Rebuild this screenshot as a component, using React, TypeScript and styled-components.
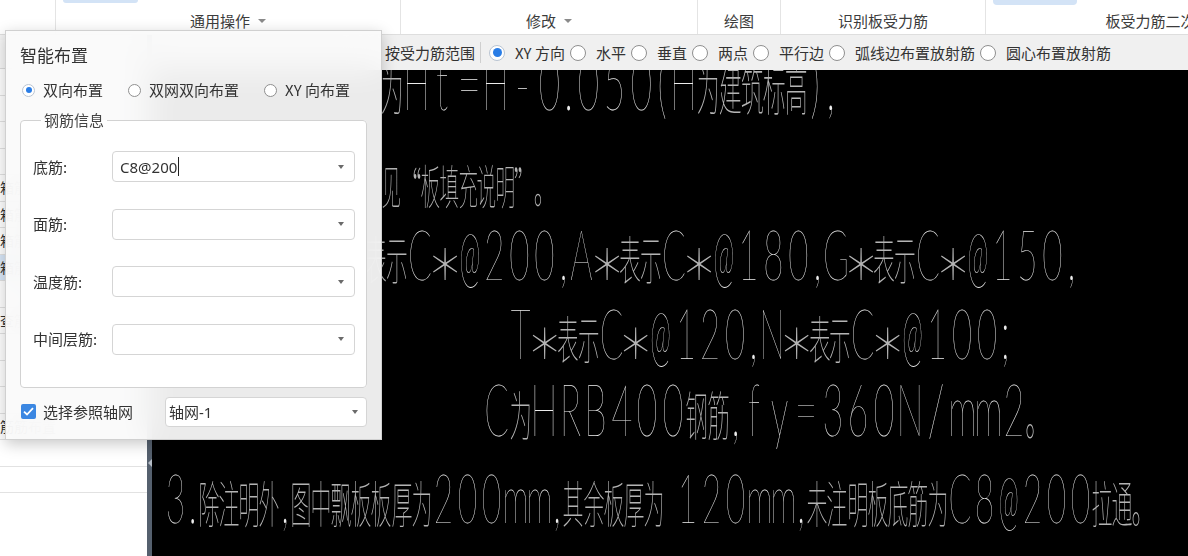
import React from "react";
import styled, { createGlobalStyle } from "styled-components";

const GlobalStyle = createGlobalStyle`
  html, body { margin: 0; padding: 0; }
  body {
    width: 1188px;
    height: 556px;
    overflow: hidden;
    background: #fff;
    font-family: "Noto Sans CJK SC", "Noto Sans", sans-serif;
  }
`;

const Page = styled.div`
  position: relative;
  width: 1188px;
  height: 556px;
  display: flex;
  flex-direction: column;
  overflow: hidden;
  color: #333;
  font-family: "Noto Sans CJK SC", "Noto Sans", sans-serif;
`;

/* ---------- ribbon ---------- */

const Ribbon = styled.div`
  height: 35px;
  flex: none;
  display: flex;
  background: #fff;
  border-bottom: 1px solid #dedede;
  box-sizing: border-box;
  overflow: hidden;
`;

const RibbonGroup = styled.div<{ $w: number; $first?: boolean }>`
  width: ${(p) => p.$w}px;
  flex: none;
  box-sizing: border-box;
  border-left: ${(p) => (p.$first ? "none" : "1px solid #e4e4e4")};
  display: flex;
  flex-direction: column;
  justify-content: space-between;
  align-items: center;
  padding-bottom: 3px;
`;

const ButtonStub = styled.div<{ $w: number; $h: number }>`
  align-self: flex-start;
  margin-left: 7px;
  width: ${(p) => p.$w}px;
  height: ${(p) => p.$h}px;
  background: #d3e3f6;
  border-radius: 0 0 4px 4px;
`;

const GroupLabel = styled.div`
  margin-top: auto;
  display: flex;
  align-items: center;
  font-size: 15px;
  line-height: 20px;
  color: #3c3c3c;
  white-space: nowrap;
`;

const Caret = styled.span`
  width: 0;
  height: 0;
  margin-left: 8px;
  border-left: 4px solid transparent;
  border-right: 4px solid transparent;
  border-top: 4px solid #8a8a8a;
`;

/* ---------- body ---------- */

const Body = styled.div`
  flex: 1;
  display: flex;
  min-height: 0;
`;

const LeftPanel = styled.div`
  width: 147px;
  flex: none;
  background: #fff;
  display: flex;
  flex-direction: column;
  overflow: hidden;
`;

const PanelHead = styled.div`
  height: 34px;
  flex: none;
  box-sizing: border-box;
  border-top: 5px solid #f3f3f3;
  border-bottom: 1px solid #dcdcdc;
  background: #f7f7f7;
`;

const PanelRow = styled.div<{ $active?: boolean }>`
  height: 26.5px;
  flex: none;
  box-sizing: border-box;
  border-bottom: 1px solid #e2e2e2;
  background: ${(p) => (p.$active ? "#d8e7f8" : "#fff")};
  font-size: 14px;
  line-height: 25px;
  white-space: nowrap;
  color: #333;
`;

const Splitter = styled.div`
  width: 5px;
  flex: none;
  background: #55606e;
  display: flex;
  flex-direction: column;
  align-items: center;
  padding-top: 424px;
  box-sizing: border-box;
`;

const SplitArrow = styled.span`
  width: 0;
  height: 0;
  border-top: 4px solid transparent;
  border-bottom: 4px solid transparent;
  border-right: 4px solid #b5bcc6;
`;

const Workspace = styled.div`
  flex: 1;
  display: flex;
  flex-direction: column;
  min-width: 0;
`;

const OptionsBar = styled.div`
  height: 35px;
  flex: none;
  display: flex;
  align-items: center;
  padding-left: 233px;
  background: #f0f0f0;
  font-size: 15px;
  color: #333;
  white-space: nowrap;
`;

const BarSep = styled.span`
  width: 1px;
  height: 21px;
  margin: 0 8px 0 5px;
  background: #cfcfcf;
`;

const BarOption = styled.label`
  display: flex;
  align-items: center;
  gap: 10px;
  margin-right: 5px;
`;

const Radio = styled.span<{ $on?: boolean; $size: number }>`
  width: ${(p) => p.$size}px;
  height: ${(p) => p.$size}px;
  flex: none;
  box-sizing: border-box;
  border-radius: 50%;
  border: 1px solid ${(p) => (p.$on ? "#b9c4d2" : "#8f8f8f")};
  background: #fff;
  display: inline-flex;
  align-items: center;
  justify-content: center;

  &::after {
    content: "";
    display: ${(p) => (p.$on ? "block" : "none")};
    width: ${(p) => p.$size - 7}px;
    height: ${(p) => p.$size - 7}px;
    border-radius: 50%;
    background: #2a7de6;
  }
`;

const Canvas = styled.div`
  flex: 1;
  position: relative;
  background: #000;
  overflow: hidden;
`;

/* ---------- CAD text on the canvas ---------- */

type Kind = "cjk" | "ast" | "full" | "punct" | "space" | "paren" | "at" | "sym" | "latin";

const kindOf = (ch: string): Kind => {
  if (ch === "＊") return "ast";
  if ("。“”".includes(ch)) return "full";
  if (/[\u4e00-\u9fff]/.test(ch)) return "cjk";
  if (",.;".includes(ch)) return "punct";
  if (ch === " ") return "space";
  if ("()".includes(ch)) return "paren";
  if (ch === "@") return "at";
  if ("=-/".includes(ch)) return "sym";
  return "latin";
};

// cell width, glyph size and horizontal squeeze per kind of character
const CELL: Record<Kind, { w: number; size: number; sx: number; cjk: boolean }> = {
  cjk: { w: 21, size: 52, sx: 0.42, cjk: true },
  ast: { w: 25, size: 42, sx: 0.85, cjk: true },
  full: { w: 22, size: 48, sx: 0.5, cjk: true },
  punct: { w: 12, size: 70, sx: 0.6, cjk: false },
  space: { w: 12, size: 70, sx: 1, cjk: false },
  paren: { w: 16, size: 70, sx: 0.5, cjk: false },
  at: { w: 25, size: 70, sx: 0.36, cjk: false },
  sym: { w: 26, size: 70, sx: 0.55, cjk: false },
  latin: { w: 25, size: 70, sx: 0.5, cjk: false },
};

const CadLine = styled.div<{ $s: number }>`
  position: absolute;
  white-space: nowrap;
  font-family: Lato, "DejaVu Sans", sans-serif;
  font-weight: 100;
  font-size: ${(p) => 70 * p.$s}px;
  line-height: 1;
  color: #ececec;
  filter: grayscale(1);
`;

const Cell = styled.span<{ $w: number }>`
  display: inline-flex;
  justify-content: center;
  width: ${(p) => p.$w}px;
  vertical-align: baseline;
`;

const Glyph = styled.span<{ $size: number; $sx: number; $cjk: boolean }>`
  display: inline-block;
  font-family: ${(p) =>
    p.$cjk
      ? '"Noto Sans CJK SC Thin", "Noto Sans CJK SC Light", "Noto Sans CJK SC", sans-serif'
      : 'Lato, "DejaVu Sans", sans-serif'};
  font-weight: 100;
  color: ${(p) => (p.$cjk ? "#b4b4b4" : "#ececec")};
  font-size: ${(p) => p.$size}px;
  line-height: 1;
  transform: scaleX(${(p) => p.$sx});
  transform-origin: center;
`;

const CAD_LINES = [
  { text: "为Ht=H-0.050(H为建筑标高),", x: 229, y: -25, s: 1.05 },
  { text: "见“板填充说明”。", x: 230, y: 78, s: 0.9 },
  { text: "表示C＊@200,A＊表示C＊@180,G＊表示C＊@150,", x: 213, y: 148, s: 1 },
  { text: "T＊表示C＊@120,N＊表示C＊@100;", x: 356, y: 228, s: 0.99 },
  { text: "C为HRB400钢筋,fy=360N/mm2。", x: 332, y: 302, s: 1.03 },
  { text: "3.除注明外,图中飘板板厚为200mm,其余板厚为 120mm,未注明板底筋为C8@200拉通。", x: 11, y: 394, s: 0.96 },
];

const CadText = ({ text, x, y, s }: { text: string; x: number; y: number; s: number }) => (
  <CadLine $s={s} style={{ left: x, top: y }}>
    {Array.from(text).map((ch, i) => {
      const c = CELL[kindOf(ch)];
      return (
        <Cell key={i} $w={c.w * s}>
          <Glyph $size={c.size * s} $sx={c.sx} $cjk={c.cjk}>
            {ch === " " ? "\u00a0" : ch}
          </Glyph>
        </Cell>
      );
    })}
  </CadLine>
);

/* ---------- floating dialog ---------- */

const Dialog = styled.div`
  position: absolute;
  left: 5px;
  top: 30px;
  width: 377px;
  height: 410px;
  box-sizing: border-box;
  padding: 13px 14px 0;
  background: rgba(250, 250, 250, 0.94);
  backdrop-filter: blur(16px);
  border: 1px solid #d0d0d0;
  box-shadow: 0 4px 14px rgba(0, 0, 0, 0.22);
  display: flex;
  flex-direction: column;
  font-size: 15px;
  color: #333;
  z-index: 5;
`;

const DialogTitle = styled.div`
  font-size: 17px;
  line-height: 22px;
  color: #333;
`;

const ModeRow = styled.div`
  margin-top: 13px;
  height: 22px;
  display: flex;
  align-items: center;
  gap: 25px;
  padding-left: 2px;
`;

const ModeOption = styled.label`
  display: flex;
  align-items: center;
  gap: 8px;
  line-height: 22px;
  white-space: nowrap;
`;

const Group = styled.fieldset`
  margin: 9px 0 0;
  padding: 21px 11px 32px 12px;
  border: 1px solid #d2d2d2;
  border-radius: 4px;
  background: #fff;
  display: flex;
  flex-direction: column;
  gap: 26.5px;
  min-width: 0;
`;

const Legend = styled.legend`
  margin-left: 8px;
  padding: 0 3px;
  font-size: 15px;
  line-height: 20px;
  color: #444;
`;

const Field = styled.div`
  display: grid;
  grid-template-columns: 79px 1fr;
  align-items: center;
`;

const FieldLabel = styled.span`
  font-size: 15px;
  line-height: 20px;
  color: #333;
`;

const Combo = styled.div<{ $h: number; $pl: number; $pr: number }>`
  height: ${(p) => p.$h}px;
  box-sizing: border-box;
  border: 1px solid #d5d5d5;
  border-radius: 4px;
  background: #fff;
  display: flex;
  align-items: center;
  padding: 0 ${(p) => p.$pr}px 0 ${(p) => p.$pl}px;
  font-size: 15px;
  color: #333;
`;

const ComboValue = styled.span`
  flex: 1;
  display: flex;
  align-items: center;
  font-family: "Noto Sans", "Noto Sans CJK SC", sans-serif;
  white-space: nowrap;
`;

const TextCaret = styled.span`
  width: 1px;
  height: 19px;
  margin-left: 1px;
  background: #222;
`;

const DropArrow = styled.span`
  width: 0;
  height: 0;
  border-left: 3px solid transparent;
  border-right: 3px solid transparent;
  border-top: 4px solid #6a6a6a;
`;

const FooterRow = styled.div`
  margin-top: 9px;
  display: flex;
  align-items: center;
`;

const CheckLabel = styled.label`
  display: flex;
  align-items: center;
  gap: 7px;
  padding-left: 1px;
  white-space: nowrap;
`;

const CheckBox = styled.span`
  width: 15px;
  height: 15px;
  border-radius: 2px;
  background: #3b87e2;
  display: inline-flex;
  align-items: center;
  justify-content: center;
`;

const AxisSelect = styled.div`
  margin-left: auto;
  width: 202px;
`;

const FIELDS = [
  { label: "底筋:", value: "C8@200", focused: true },
  { label: "面筋:", value: "" },
  { label: "温度筋:", value: "" },
  { label: "中间层筋:", value: "" },
];

const BAR_OPTIONS = ["XY 方向", "水平", "垂直", "两点", "平行边", "弧线边布置放射筋", "圆心布置放射筋"];

const PANEL_ROWS = ["", "", "", "", "箱", "箱", "箱", "箱", "", "查", "", "", "", "筋", "", ""];

export default function App() {
  return (
    <Page>
      <GlobalStyle />
      <Ribbon>
        <RibbonGroup $w={55} $first />
        <RibbonGroup $w={345}>
          <ButtonStub $w={75} $h={3} />
          <GroupLabel>
            通用操作
            <Caret />
          </GroupLabel>
        </RibbonGroup>
        <RibbonGroup $w={297}>
          <GroupLabel>
            修改
            <Caret />
          </GroupLabel>
        </RibbonGroup>
        <RibbonGroup $w={83}>
          <GroupLabel>绘图</GroupLabel>
        </RibbonGroup>
        <RibbonGroup $w={205}>
          <GroupLabel>识别板受力筋</GroupLabel>
        </RibbonGroup>
        <RibbonGroup $w={360}>
          <ButtonStub $w={84} $h={5} />
          <GroupLabel>板受力筋二次编辑</GroupLabel>
        </RibbonGroup>
      </Ribbon>

      <Body>
        <LeftPanel>
          <PanelHead />
          {PANEL_ROWS.map((t, i) => (
            <PanelRow key={i} $active={i === 7}>
              {t ? t + "筋布置" : ""}
            </PanelRow>
          ))}
        </LeftPanel>
        <Splitter>
          <SplitArrow />
        </Splitter>
        <Workspace>
          <OptionsBar>
            按受力筋范围
            <BarSep />
            {BAR_OPTIONS.map((o, i) => (
              <BarOption key={o}>
                <Radio $size={16} $on={i === 0} />
                {o}
              </BarOption>
            ))}
          </OptionsBar>
          <Canvas>
            {CAD_LINES.map((l, i) => (
              <CadText key={i} {...l} />
            ))}
          </Canvas>
        </Workspace>
      </Body>

      <Dialog>
        <DialogTitle>智能布置</DialogTitle>
        <ModeRow>
          <ModeOption>
            <Radio $size={13} $on />
            双向布置
          </ModeOption>
          <ModeOption>
            <Radio $size={13} />
            双网双向布置
          </ModeOption>
          <ModeOption>
            <Radio $size={13} />
            XY 向布置
          </ModeOption>
        </ModeRow>
        <Group>
          <Legend>钢筋信息</Legend>
          {FIELDS.map((f) => (
            <Field key={f.label}>
              <FieldLabel>{f.label}</FieldLabel>
              <Combo $h={31} $pl={7} $pr={10}>
                <ComboValue>
                  {f.value}
                  {f.focused && <TextCaret />}
                </ComboValue>
                <DropArrow />
              </Combo>
            </Field>
          ))}
        </Group>
        <FooterRow>
          <CheckLabel>
            <CheckBox>
              <svg width="11" height="9" viewBox="0 0 11 9">
                <path d="M1 4.6 L4 7.5 L10 1.2" fill="none" stroke="#fff" strokeWidth="1.8" />
              </svg>
            </CheckBox>
            选择参照轴网
          </CheckLabel>
          <AxisSelect>
            <Combo $h={30} $pl={3} $pr={8}>
              <ComboValue>轴网-1</ComboValue>
              <DropArrow />
            </Combo>
          </AxisSelect>
        </FooterRow>
      </Dialog>
    </Page>
  );
}
